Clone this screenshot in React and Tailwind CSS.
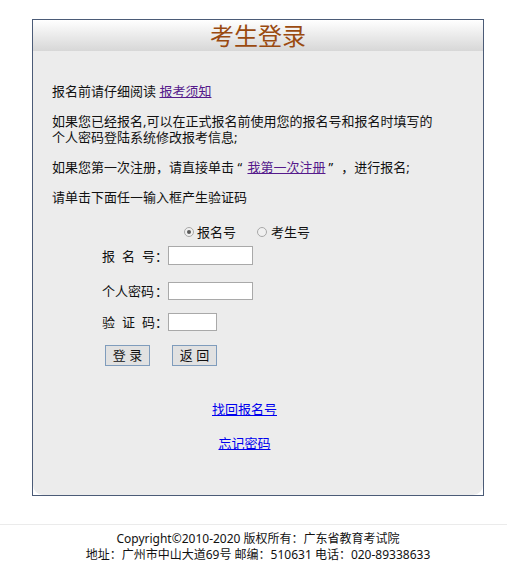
export default function App() {
  return (
    <div className="min-h-[575px] bg-white font-['Noto_Sans','Noto_Sans_CJK_SC',sans-serif] text-[#111]">
      {/* Login panel */}
      <div className="pt-[19px] pl-[32px]">
        <div className="w-[452px] border border-[#4b5b77] bg-white">
          <div className="h-[31px] bg-gradient-to-b from-white to-[#d7d7d7] text-center text-[24px] leading-[31px] text-[#9a4a10]">
            考生登录
          </div>
          <div className="rounded-b-[10px] bg-[#ececec] pt-[32px] pb-[44px] text-[13px] leading-[16px]">
            <div className="pl-[19px]">
              <p>
                报名前请仔细阅读{' '}
                <a href="#" className="text-[#551a8b] underline">报考须知</a>
              </p>
              <p className="mt-[14px]">
                <span className="block">如果您已经报名,可以在正式报名前使用您的报名号和报名时填写的</span>
                <span className="block">个人密码登陆系统修改报考信息;</span>
              </p>
              <p className="mt-[14px]">
                如果您第一次注册，请直接单击 “{' '}
                <a href="#" className="ml-[2px] text-[#551a8b] underline">我第一次注册</a>
                <span className="ml-[3px]">”</span>
                <span className="ml-[8px]">，进行报名;</span>
              </p>
              <p className="mt-[14px]">请单击下面任一输入框产生验证码</p>
            </div>

            {/* Radio choice */}
            <div className="mt-[19px] flex h-[16px] items-center pl-[151px]">
              <span className="flex h-[10px] w-[10px] items-center justify-center rounded-full border border-[#a8a8a8] bg-[#f0f0f0]">
                <span className="h-[4px] w-[4px] rounded-full bg-[#5a5a5a]" />
              </span>
              <span className="ml-[3px]">报名号</span>
              <span className="ml-[21px] h-[10px] w-[10px] rounded-full border border-[#a8a8a8] bg-[#f0f0f0]" />
              <span className="ml-[4px]">考生号</span>
            </div>

            {/* Form */}
            <div className="pl-[69px]">
              <div className="mt-[6px] flex items-center">
                <span className="flex w-[53px] justify-between">
                  <span>报</span><span>名</span><span>号</span>
                </span>
                <span className="w-[13px]">：</span>
                <input className="h-[19px] w-[85px] border border-[#a9a9a9] bg-white outline-none" />
              </div>
              <div className="mt-[17px] flex items-center">
                <span className="w-[53px] whitespace-nowrap">个人密码</span>
                <span className="w-[13px]">：</span>
                <input type="password" className="h-[18px] w-[85px] border border-[#a9a9a9] bg-white outline-none" />
              </div>
              <div className="mt-[13px] flex items-center">
                <span className="flex w-[53px] justify-between">
                  <span>验</span><span>证</span><span>码</span>
                </span>
                <span className="w-[13px]">：</span>
                <input className="h-[18px] w-[49px] border border-[#a9a9a9] bg-white outline-none" />
              </div>
              <div className="mt-[14px] flex gap-[22px] pl-[3px]">
                <button className="h-[21px] w-[45px] border border-[#7f9cbc] bg-[#e1e1e1] text-[13px] leading-[19px]">
                  登 录
                </button>
                <button className="h-[21px] w-[45px] border border-[#7f9cbc] bg-[#e1e1e1] text-[13px] leading-[19px]">
                  返 回
                </button>
              </div>
            </div>

            {/* Links */}
            <div className="mt-[35px] pr-[27px] text-center">
              <a href="#" className="text-[#0000ee] underline">找回报名号</a>
            </div>
            <div className="mt-[18px] pr-[27px] text-center">
              <a href="#" className="text-[#0000ee] underline">忘记密码</a>
            </div>
          </div>
        </div>
      </div>

      {/* Footer */}
      <div className="mt-[28px] border-t border-[#ebebeb] pt-[6px] pl-[9px] text-center text-[12px] leading-[16px] text-[#111]">
        <p>Copyright©2010-2020 版权所有：广东省教育考试院</p>
        <p>地址：广州市中山大道69号 邮编：510631 电话：020-89338633</p>
      </div>
    </div>
  );
}
